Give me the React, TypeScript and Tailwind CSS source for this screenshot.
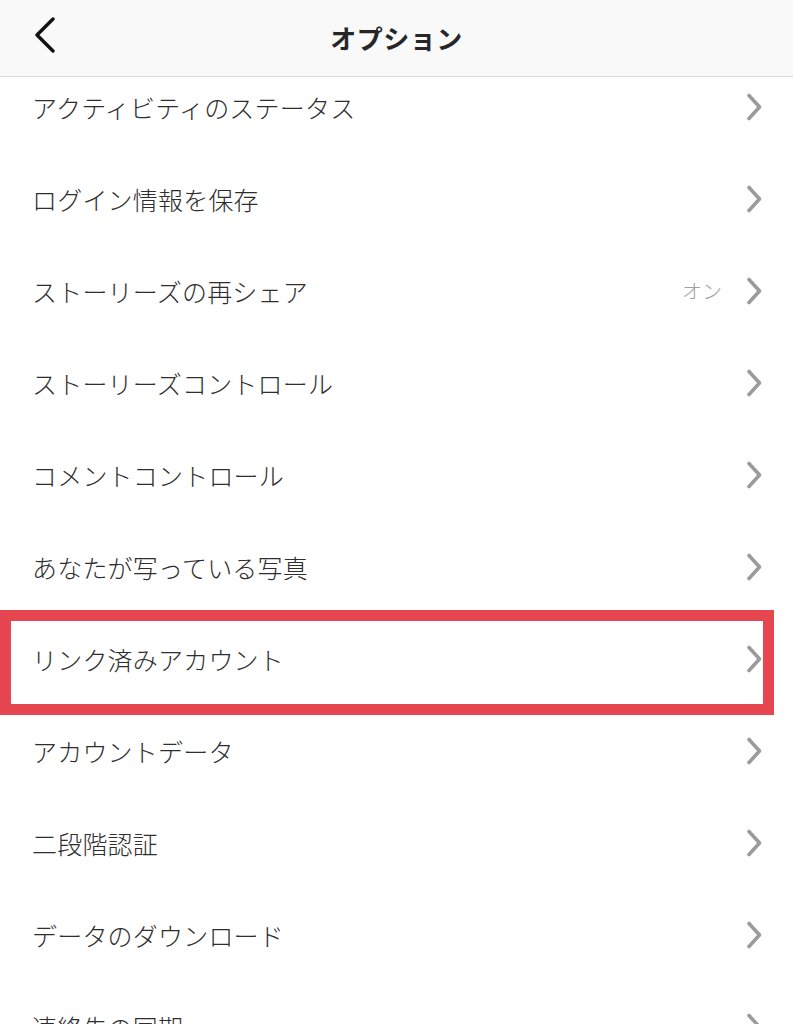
import React from "react";

const FONT = { fontFamily: '"Noto Sans CJK JP", "Noto Sans", sans-serif' };

function Chevron() {
  return (
    <svg width="17" height="28" viewBox="0 0 17 28" className="shrink-0">
      <path d="M3 2.5 L13.5 14 L3 25.5" fill="none" stroke="#9b9b9b" strokeWidth="3.6" strokeLinecap="round" strokeLinejoin="round" />
    </svg>
  );
}

function Row({ label, value, first }: { label: string; value?: string; first?: boolean }) {
  return (
    <div className={`flex items-center pl-[32px] pr-[30px] ${first ? "h-[76px] pb-[16px]" : "h-[92px]"}`}>
      <span className="flex-1 text-[25px] leading-none text-[#2e2e2e] font-light tracking-[0.2px]">{label}</span>
      {value && <span className="text-[20px] leading-none text-[#a0a0a0] mr-[24px] font-light">{value}</span>}
      <Chevron />
    </div>
  );
}

export default function App() {
  const rows = [
    "ストーリーズの再シェア",
    "ストーリーズコントロール",
    "コメントコントロール",
    "あなたが写っている写真",
  ];
  return (
    <div className="w-[793px] h-[1024px] overflow-hidden bg-white" style={FONT}>
      <div className="h-[77px] bg-[#f9f9f9] border-b border-[#d6d6d6] flex items-center relative">
        <div className="absolute left-[33px] top-[17px]">
          <svg width="24" height="36" viewBox="0 0 24 36">
            <path d="M20 2 L4 18 L20 34" fill="none" stroke="#111111" strokeWidth="3.4" strokeLinecap="round" strokeLinejoin="round" />
          </svg>
        </div>
        <div className="flex-1 text-center text-[26px] font-bold text-[#262626] leading-none tracking-[0.5px]">オプション</div>
      </div>
      <div>
        <Row first label="アクティビティのステータス" />
        <Row label="ログイン情報を保存" />
        <Row label={rows[0]} value="オン" />
        <Row label={rows[1]} />
        <Row label={rows[2]} />
        <Row label={rows[3]} />
        <div className="relative">
          <Row label="リンク済みアカウント" />
          <div className="absolute left-0 top-[-3px] w-[774px] h-[105px] border-[11px] border-[#e6464f]" />
        </div>
        <Row label="アカウントデータ" />
        <Row label="二段階認証" />
        <Row label="データのダウンロード" />
        <Row label="連絡先の同期" />
      </div>
    </div>
  );
}
